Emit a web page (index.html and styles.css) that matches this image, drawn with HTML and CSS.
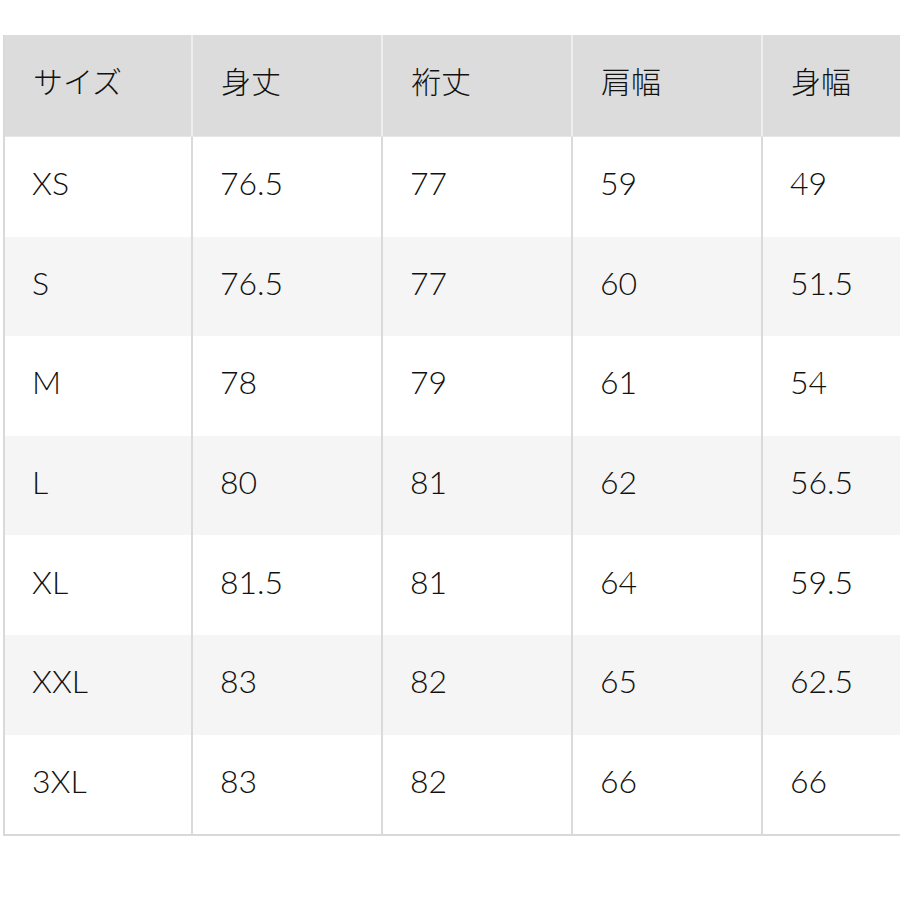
FILE: index.html
```html
<!DOCTYPE html>
<html lang="ja">
<head>
<meta charset="utf-8">
<link rel="stylesheet" href="styles.css">
</head>
<body>
<div class="table">
  <div class="row head">
    <div class="cell">サイズ</div><div class="cell">身丈</div><div class="cell">裄丈</div><div class="cell">肩幅</div><div class="cell">身幅</div>
  </div>
  <div class="row">
    <div class="cell">XS</div><div class="cell">76.5</div><div class="cell">77</div><div class="cell">59</div><div class="cell">49</div>
  </div>
  <div class="row alt">
    <div class="cell">S</div><div class="cell">76.5</div><div class="cell">77</div><div class="cell">60</div><div class="cell">51.5</div>
  </div>
  <div class="row">
    <div class="cell">M</div><div class="cell">78</div><div class="cell">79</div><div class="cell">61</div><div class="cell">54</div>
  </div>
  <div class="row alt">
    <div class="cell">L</div><div class="cell">80</div><div class="cell">81</div><div class="cell">62</div><div class="cell">56.5</div>
  </div>
  <div class="row">
    <div class="cell">XL</div><div class="cell">81.5</div><div class="cell">81</div><div class="cell">64</div><div class="cell">59.5</div>
  </div>
  <div class="row alt">
    <div class="cell">XXL</div><div class="cell">83</div><div class="cell">82</div><div class="cell">65</div><div class="cell">62.5</div>
  </div>
  <div class="row">
    <div class="cell">3XL</div><div class="cell">83</div><div class="cell">82</div><div class="cell">66</div><div class="cell">66</div>
  </div>
</div>
</body>
</html>
```
FILE: styles.css
```css
html, body {
  margin: 0;
  padding: 0;
  background: #ffffff;
  overflow: hidden;
}
body {
  padding: 35px 0 0 3px;
  font-family: "Lato", "Noto Sans CJK JP", sans-serif;
  color: #111111;
}
.table {
  width: 897px;
  box-sizing: border-box;
  border-left: 2px solid #d9d9d9;
  border-bottom: 2px solid #d9d9d9;
}
.row {
  display: grid;
  grid-template-columns: 188px 190px 190px 190px 1fr;
  height: 99.6px;
  background: #ffffff;
}
.row.alt {
  background: #f5f5f5;
}
.row.head {
  height: 101px;
  background: #dcdcdc;
  border-bottom: 1px solid #e6e6e6;
  font-family: "Noto Sans CJK JP", sans-serif;
}
.cell {
  display: flex;
  align-items: center;
  padding-left: 27px;
  padding-bottom: 8px;
  font-size: 32px;
  font-weight: 300;
  border-right: 2px solid #dadada;
}
.cell:last-child {
  border-right: none;
}
.row.head .cell {
  font-size: 30px;
  padding-bottom: 12px;
  padding-left: 28px;
  border-right: 2px solid #eeeeee;
}
.row.head .cell:last-child {
  border-right: none;
}
```
